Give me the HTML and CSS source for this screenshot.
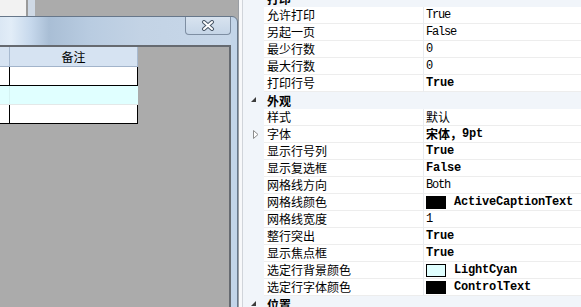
FILE: index.html
```html
<!DOCTYPE html>
<html lang="zh-CN">
<head>
    <meta charset="UTF-8">
    <title>属性</title>
    <link rel="stylesheet" href="styles.css">
</head>
<body>
    <div class="mdi">
        <div class="other-win"></div>

        <!-- 打印设置窗口 -->
        <div class="win">
            <div class="win-title">
                <div class="win-close">
                    <svg width="14" height="11" viewBox="0 0 14 11">
                        <path d="M3 2 L11 9 M11 2 L3 9" stroke="#4a5868" stroke-width="4" stroke-linecap="round"/>
                        <path d="M3 2 L11 9 M11 2 L3 9" stroke="#ffffff" stroke-width="2" stroke-linecap="round"/>
                    </svg>
                </div>
            </div>
            <div class="win-client">
                <div class="dgv">
                    <div class="dgv-head">
                        <div class="hc first"></div>
                        <div class="hc">备注</div>
                    </div>
                    <div class="dgv-row">
                        <div class="c first"></div>
                        <div class="c"></div>
                    </div>
                    <div class="dgv-row sel">
                        <div class="c first"></div>
                        <div class="c"></div>
                    </div>
                    <div class="dgv-row">
                        <div class="c first"></div>
                        <div class="c"></div>
                    </div>
                </div>
            </div>
        </div>
    </div>

    <div class="splitter"></div>

    <!-- 属性表格 -->
    <div class="pgrid">
        <div class="plist">
            <div class="cat">
                <div class="gut"><span class="tri"></span></div>
                <div class="cat-name">打印</div>
            </div>
            <div class="prow"><div class="gut"></div><div class="pname">允许打印</div><div class="pval">True</div></div>
            <div class="prow"><div class="gut"></div><div class="pname">另起一页</div><div class="pval">False</div></div>
            <div class="prow"><div class="gut"></div><div class="pname">最少行数</div><div class="pval">0</div></div>
            <div class="prow"><div class="gut"></div><div class="pname">最大行数</div><div class="pval">0</div></div>
            <div class="prow"><div class="gut"></div><div class="pname">打印行号</div><div class="pval b">True</div></div>

            <div class="cat">
                <div class="gut"><span class="tri"></span></div>
                <div class="cat-name">外观</div>
            </div>
            <div class="prow"><div class="gut"></div><div class="pname">样式</div><div class="pval cn">默认</div></div>
            <div class="prow">
                <div class="gut">
                    <svg class="exp" width="6" height="9" viewBox="0 0 6 9"><path d="M0.5 0.5 L5 4.5 L0.5 8.5 Z" fill="#fff" stroke="#8c8c8c"/></svg>
                </div>
                <div class="pname">字体</div>
                <div class="pval b"><span class="cn">宋体，</span>9pt</div>
            </div>
            <div class="prow"><div class="gut"></div><div class="pname">显示行号列</div><div class="pval b">True</div></div>
            <div class="prow"><div class="gut"></div><div class="pname">显示复选框</div><div class="pval b">False</div></div>
            <div class="prow"><div class="gut"></div><div class="pname">网格线方向</div><div class="pval">Both</div></div>
            <div class="prow"><div class="gut"></div><div class="pname">网格线颜色</div><div class="pval b"><span class="swatch black"></span>ActiveCaptionText</div></div>
            <div class="prow"><div class="gut"></div><div class="pname">网格线宽度</div><div class="pval">1</div></div>
            <div class="prow"><div class="gut"></div><div class="pname">整行突出</div><div class="pval b">True</div></div>
            <div class="prow"><div class="gut"></div><div class="pname">显示焦点框</div><div class="pval b">True</div></div>
            <div class="prow"><div class="gut"></div><div class="pname">选定行背景颜色</div><div class="pval b"><span class="swatch cyan"></span>LightCyan</div></div>
            <div class="prow"><div class="gut"></div><div class="pname">选定行字体颜色</div><div class="pval b"><span class="swatch black"></span>ControlText</div></div>

            <div class="cat">
                <div class="gut"><span class="tri"></span></div>
                <div class="cat-name">位置</div>
            </div>
        </div>
    </div>
</body>
</html>
```

FILE: styles.css
```css
/* 基本样式 */
* {
    margin: 0;
    padding: 0;
    box-sizing: border-box;
}

body {
    display: flex;
    width: 581px;
    height: 307px;
    overflow: hidden;
    background-color: #ababab;
    font-family: "Noto Sans CJK SC", "Liberation Sans", sans-serif;
    font-size: 12px;
    color: #000;
}

/* MDI 区域 */
.mdi {
    position: relative;
    width: 238px;
    flex-shrink: 0;
    background-color: #ababab;
    overflow: hidden;
}

.other-win {
    position: absolute;
    left: -10px;
    top: -10px;
    width: 45px;
    height: 26px;
    background-color: #f2f2f2;
    border-right: 7px solid #cfd9e5;
    box-shadow: 2px 0 0 #a5a5a5 inset;
}

.other-win::after {
    content: "";
    position: absolute;
    right: 0;
    top: 0;
    bottom: 0;
    width: 2px;
    background-color: #9a9a9a;
}

/* 窗口 */
.win {
    position: absolute;
    left: -20px;
    top: 16px;
    width: 258px;
    height: 320px;
    border: 1px solid #67778a;
    border-top-right-radius: 6px;
    background-color: #c3d5e9;
    padding-right: 6px;
    display: flex;
    flex-direction: column;
}

.win-title {
    position: relative;
    height: 28px;
    flex-shrink: 0;
    border-top-right-radius: 5px;
    background: linear-gradient(90deg, #cfdeee 0, #e2edf8 30px, #c6d8ec 50px, #a9bed5 68px, #b9cce1 110px, #c3d3e5 160px, #c7d7e9 100%);
}

.win-close {
    position: absolute;
    top: 0;
    right: 0;
    width: 46px;
    height: 18px;
    border: 1px solid #7e8ea2;
    border-top: none;
    border-radius: 0 0 4px 4px;
    background: linear-gradient(#d8e3ef, #c5d5e7);
    display: flex;
    align-items: center;
    justify-content: center;
}

.win-client {
    flex-grow: 1;
    background-color: #ababab;
    border-top: 2px solid #666a70;
    border-right: 2px solid #666a70;
}

/* 数据表格 */
.dgv {
    width: 157px;
}

.dgv-head {
    display: grid;
    grid-template-columns: 29px 128px;
    height: 20px;
    background-color: #d6e3f2;
    border-bottom: 1px solid #a2b4cb;
}

.hc {
    text-align: center;
    line-height: 19px;
    border-right: 1px solid #a8bad0;
}

.dgv-row {
    display: grid;
    grid-template-columns: 29px 128px;
    height: 19px;
    background-color: #fff;
    border-bottom: 1px solid #000;
}

.dgv-row .c {
    border-right: 1px solid #000;
}

.dgv-row.sel {
    background-color: #e0ffff;
    border-bottom: 1px solid #e4e8e8;
}

.dgv-row.sel .c {
    border-right: 1px solid #e0ffff;
}

.dgv-row.sel .c.first {
    border-right: 1px solid #d4f2f2;
}

/* 分隔条 */
.splitter {
    width: 5px;
    flex-shrink: 0;
    background-color: #f7f8fa;
    border-left: 1px solid #9a9ea4;
    border-right: 1px solid #d0d4da;
}

/* 属性表格 */
.pgrid {
    flex-grow: 1;
    background-color: #f1f5fa;
    overflow: hidden;
}

.plist {
    margin-top: -10px;
}

.prow, .cat {
    display: grid;
    grid-template-columns: 21px 159px 1fr;
    height: 17px;
    overflow: hidden;
}

.gut {
    position: relative;
    background-color: #f1f5fa;
}

.pname {
    background-color: #fff;
    border-bottom: 1px solid #ededed;
    padding-left: 3px;
    line-height: 16px;
    white-space: nowrap;
}

.pval {
    background-color: #fff;
    border-bottom: 1px solid #ededed;
    border-left: 1px solid #e8ebef;
    padding-left: 2px;
    line-height: 16px;
    font-family: "Liberation Mono", monospace;
    font-size: 12px;
    letter-spacing: -1.2px;
    white-space: nowrap;
    display: flex;
    align-items: center;
}

.pval.b {
    font-weight: bold;
    letter-spacing: -0.2px;
}

.pval .cn, .pval.cn {
    font-family: "Noto Sans CJK SC", sans-serif;
    font-size: 12px;
    letter-spacing: 0;
}

.cat .cat-name {
    grid-column: span 2;
    font-weight: bold;
    font-size: 12px;
    padding-left: 3px;
    line-height: 17px;
}

.tri {
    position: absolute;
    left: 8px;
    top: 5px;
    width: 0;
    height: 0;
    border-left: 5px solid transparent;
    border-bottom: 5px solid #3c3c3c;
}

.exp {
    position: absolute;
    left: 10px;
    top: 4px;
}

.swatch {
    display: inline-block;
    width: 20px;
    height: 13px;
    border: 1px solid #000;
    margin-right: 8px;
}

.swatch.black {
    background-color: #000;
}

.swatch.cyan {
    background-color: #e0ffff;
}
```
